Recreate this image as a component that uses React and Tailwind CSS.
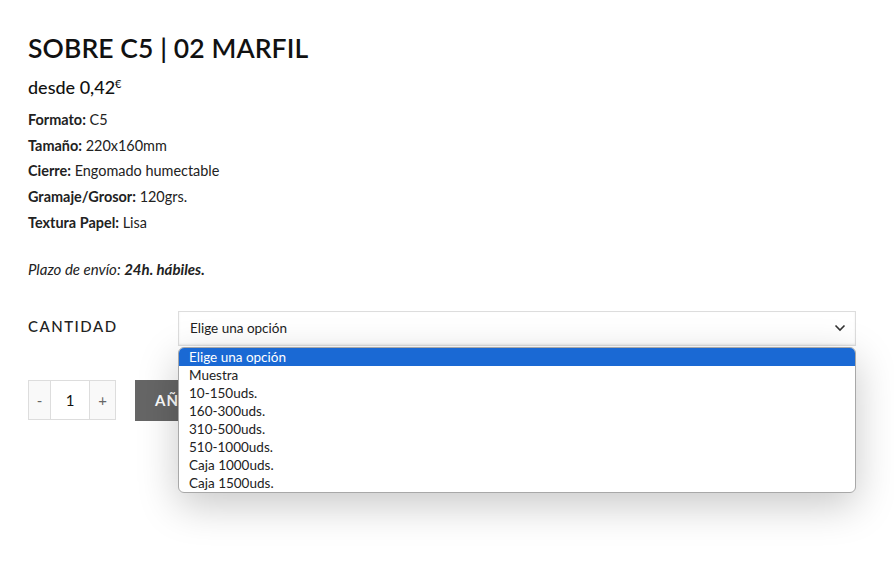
import React from 'react';

const specs = [
  ['Formato:', 'C5'],
  ['Tamaño:', '220x160mm'],
  ['Cierre:', 'Engomado humectable'],
  ['Gramaje/Grosor:', '120grs.'],
  ['Textura Papel:', 'Lisa'],
];

const options = [
  'Elige una opción',
  'Muestra',
  '10-150uds.',
  '160-300uds.',
  '310-500uds.',
  '510-1000uds.',
  'Caja 1000uds.',
  'Caja 1500uds.',
];

const App = () => {
  return (
    <div className="min-h-screen bg-white text-[#111] font-['Lato',sans-serif] pl-[28px] pr-[38px] pt-[31px]">
      <h1 className="text-[26.5px] leading-[34px] font-semibold tracking-[0.1px] text-[#111]">
        SOBRE C5 | 02 MARFIL
      </h1>

      <div className="mt-[7px] text-[18px] leading-[24px] font-medium text-[#111]">
        desde 0,42<span className="text-[11px] align-[6px]">€</span>
      </div>

      <div className="mt-[8px] text-[14.45px] leading-[25.7px] text-[#222]">
        {specs.map(([k, v]) => (
          <div key={k}>
            <span className="font-bold">{k}</span> {v}
          </div>
        ))}
      </div>

      <p className="mt-[23px] text-[15px] leading-[20px] italic text-[#222]">
        Plazo de envío: <strong className="font-bold">24h. hábiles.</strong>
      </p>

      <div className="mt-[32px] flex items-start">
        <div className="w-[150px] pt-[5px] text-[15px] leading-[20px] tracking-[1.5px] text-[#222] font-medium">
          CANTIDAD
        </div>
        <div className="relative flex-1">
          <div className="h-[35px] border border-[#ddd] bg-white shadow-[inset_0_-1px_2px_rgba(0,0,0,0.08)] flex items-center justify-between pl-[11px] pr-[9px] text-[13.5px] text-[#222]">
            <span>Elige una opción</span>
            <svg width="12" height="8" viewBox="0 0 12 8" fill="none" stroke="#333" strokeWidth="1.6">
              <path d="M1.5 1.5 L6 6 L10.5 1.5" />
            </svg>
          </div>
          <ul className="absolute left-0 right-0 top-[36px] z-10 bg-white border border-[#a8a8a8] rounded-[6px] overflow-hidden shadow-[0_12px_40px_rgba(0,0,0,0.22)] text-[13.5px] leading-[18px] text-[#222]">
            {options.map((o, i) => (
              <li
                key={o}
                className={`px-[10px] h-[18px] ${i === 0 ? 'bg-[#1a69d4] text-white' : ''}`}
              >
                {o}
              </li>
            ))}
          </ul>
        </div>
      </div>

      <div className="mt-[34px] flex items-center">
        <div className="flex h-[40px] border border-[#ddd] text-[15px] text-[#333]">
          <button className="w-[22px] bg-[#f9f9f9] text-[#666] border-r border-[#ddd]">-</button>
          <div className="w-[38px] bg-white flex items-center justify-center text-[#111]">1</div>
          <button className="w-[26px] bg-[#f9f9f9] text-[#666] border-l border-[#ddd]">+</button>
        </div>
        <button className="ml-[19px] h-[41px] bg-[#666] text-white font-bold text-[15px] tracking-[1px] px-[20px]">
          AÑADIR AL CARRITO
        </button>
      </div>
    </div>
  );
};

export default App;
